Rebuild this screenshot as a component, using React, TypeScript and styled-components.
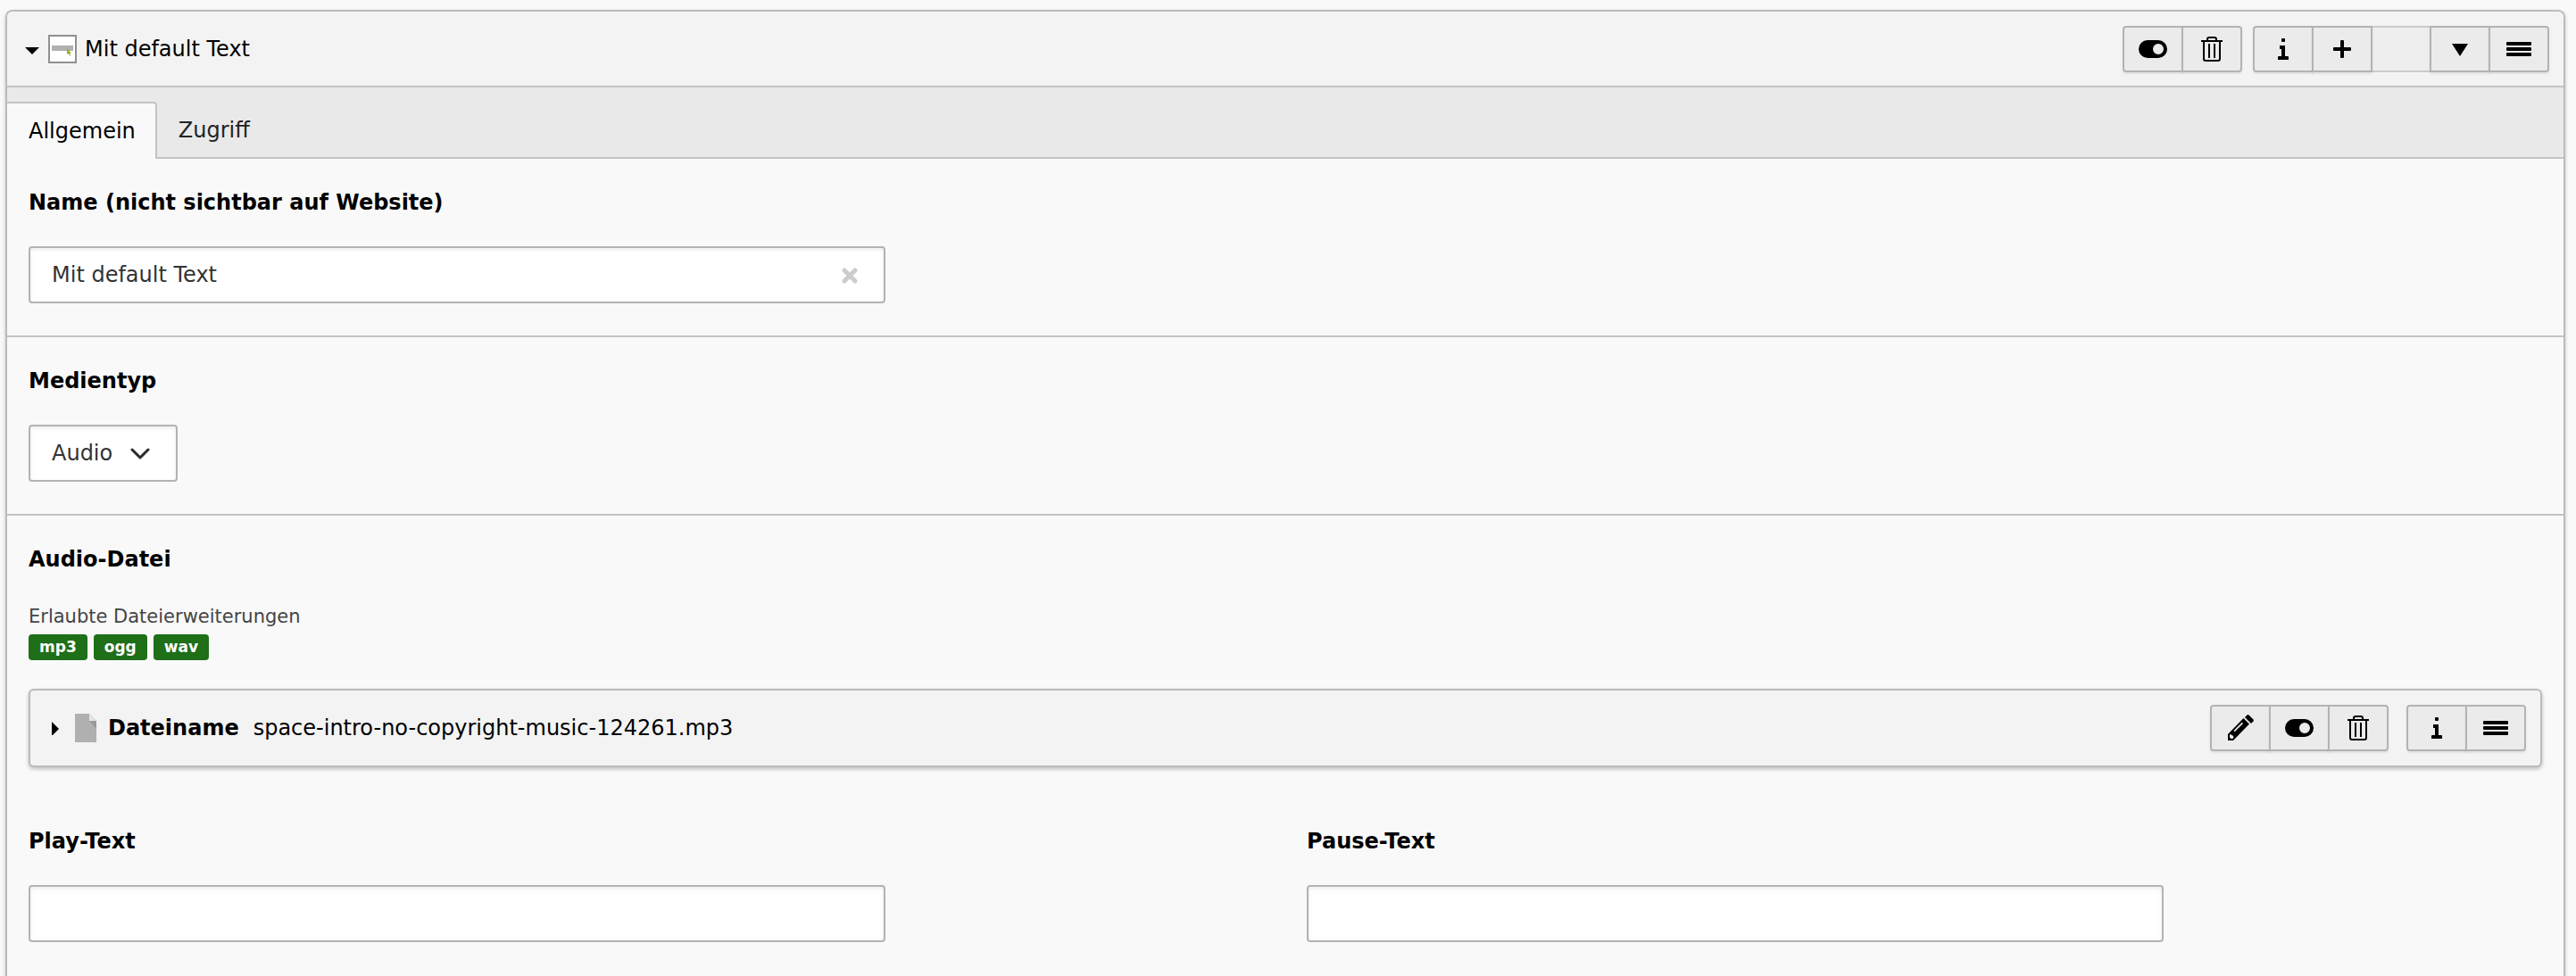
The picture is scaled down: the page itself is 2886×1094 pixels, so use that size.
import React from 'react';
import styled, { createGlobalStyle, css } from 'styled-components';

const GlobalStyle = createGlobalStyle`
  *, *::before, *::after { box-sizing: border-box; }
  body {
    margin: 0;
    background: #f9f9f9;
    color: #000;
    font-family: Verdana, "DejaVu Sans", sans-serif;
    font-size: 24px;
    line-height: 28px;
  }
  button, input, select { font: inherit; }
`;

const Page = styled.main`
  display: flex;
  flex-direction: column;
  min-height: 100vh;
  padding: 11px 12px 0 6px;
`;

const Panel = styled.section`
  flex: 1;
  border: 2px solid #bbb;
  border-bottom: 0;
  border-radius: 8px 8px 0 0;
  box-shadow: 0 2px 4px rgba(0, 0, 0, 0.2);
`;

const PanelHeader = styled.header`
  display: flex;
  align-items: center;
  justify-content: space-between;
  padding: 16px 16px 15px 20px;
  background: #f3f3f3;
  border-radius: 6px 6px 0 0;
`;

const Title = styled.div`
  display: flex;
  align-items: center;
`;

const Collapse = styled.button`
  display: flex;
  align-items: center;
  padding: 0;
  border: 0;
  background: none;
  color: #000;
`;

const RecordIcon = styled.svg`
  width: 32px;
  height: 32px;
  margin: 0 9px 0 10px;
`;

const Toolbar = styled.div<{ $gap: number }>`
  display: flex;
  gap: ${(p) => p.$gap}px;
`;

const Group = styled.div`
  display: flex;
  border-radius: 4px;
`;

const ToolButton = styled.button`
  display: flex;
  align-items: center;
  justify-content: center;
  width: 68px;
  height: 52px;
  padding: 0;
  border: 2px solid #b3b3b3;
  background: #ebebeb;
  color: #000;
  box-shadow: 0 2px 2px rgba(0, 0, 0, 0.08);

  & + & { margin-left: -2px; }
  &:first-child { border-radius: 4px 0 0 4px; }
  &:last-child { border-radius: 0 4px 4px 0; }
  &:not(:disabled) { z-index: 1; }
  &:disabled {
    background: #eee;
    border-color: #cbcbcb;
    box-shadow: none;
  }
`;

const Tabs = styled.div`
  display: flex;
  align-items: flex-end;
  padding-top: 16px;
  background: #e9e9e9;
  border-top: 2px solid #c3c3c3;
  box-shadow: inset 0 -2px 0 #c3c3c3;
`;

const Tab = styled.button<{ $active?: boolean }>`
  height: 64px;
  padding: 0 24px;
  border: 0 solid #c3c3c3;
  background: none;
  color: #212424;
  ${(p) =>
    p.$active &&
    css`
      padding: 0 22px 0 24px;
      border-width: 2px 2px 0 0;
      border-radius: 0 4px 0 0;
      background: #f9f9f9;
      color: #000;
    `}
`;

const Section = styled.div`
  padding: 36px 24px;
  & + & { border-top: 2px solid #c3c3c3; }
`;

const Label = styled.label`
  display: block;
  width: fit-content;
  margin-bottom: 36px;
  font-weight: 700;
  line-height: 26px;
`;

const Control = styled.div`
  position: relative;
  max-width: 960px;
`;

const field = css`
  height: 64px;
  border: 2px solid #b3b3b3;
  border-radius: 4px;
  background: #fff;
  color: #333;
  box-shadow: inset 0 2px 4px rgba(0, 0, 0, 0.08);
  outline: none;
`;

const TextInput = styled.input`
  ${field}
  display: block;
  width: 100%;
  padding: 0 64px 0 24px;
`;

const Clear = styled.button`
  position: absolute;
  top: 16px;
  right: 24px;
  display: flex;
  padding: 0;
  border: 0;
  background: none;
  color: #ccc;
`;

const SelectWrap = styled.div`
  position: relative;
  width: fit-content;
`;

const Select = styled.select`
  ${field}
  display: block;
  appearance: none;
  padding: 0 70px 0 24px;
`;

const Chevron = styled.svg`
  position: absolute;
  top: 16px;
  right: 26px;
  width: 32px;
  height: 32px;
  pointer-events: none;
`;

const Heading = styled.h3`
  margin: 0 0 36px;
  font-size: 24px;
  line-height: 26px;
`;

const Hint = styled.p`
  margin: 0 0 5px;
  color: #444;
  font-size: 21px;
  line-height: 30px;
`;

const Badges = styled.div`
  display: flex;
  gap: 7px;
  margin-bottom: 32px;
`;

const Badge = styled.span`
  padding: 0 12px;
  border-radius: 4px;
  background: #1f6e18;
  color: #fff;
  font-size: 17px;
  font-weight: 700;
  line-height: 29px;
`;

const FilePanel = styled.article`
  display: flex;
  align-items: center;
  justify-content: space-between;
  padding: 16px 16px 16px 20px;
  border: 2px solid #bbb;
  border-radius: 6px;
  background: #f3f3f3;
  box-shadow: 0 2px 4px rgba(0, 0, 0, 0.25);
`;

const FileIcon = styled.svg`
  width: 24px;
  height: 32px;
  margin: 0 13px 0 14px;
`;

const FileName = styled.span`
  margin-left: 16px;
`;

const Columns = styled.div`
  display: grid;
  grid-template-columns: 1fr 1fr;
  margin: 70px -24px 12px;
`;

const Column = styled.div`
  padding: 0 24px;
`;

const Svg = ({ children }: { children: React.ReactNode }) => (
  <svg width="32" height="32" viewBox="0 0 32 32" fill="currentColor" aria-hidden="true">
    {children}
  </svg>
);

const icons = {
  toggle: (
    <path fillRule="evenodd" d="M10 6h12a10 10 0 0 1 0 20H10a10 10 0 0 1 0-20zm12 4a6 6 0 1 0 0 12a6 6 0 0 0 0-12z" />
  ),
  trash: (
    <>
      <path d="M4 6h24v2H4zM12 10h2v16h-2zM18 10h2v16h-2z" />
      <path d="M7 7v20q0 2 2 2h14q2 0 2-2V7M11 7V5q0-2 2-2h6q2 0 2 2v2" fill="none" stroke="currentColor" strokeWidth="2" />
    </>
  ),
  info: <path d="M15 4h2q1 0 1 1v2q0 1-1 1h-2q-1 0-1-1V5q0-1 1-1zM12 12h6v12h3q1 0 1 1v3H10v-3q0-1 1-1h3v-8h-2z" />,
  plus: <path d="M15 6h2q1 0 1 1v7h7q1 0 1 1v2q0 1-1 1h-7v7q0 1-1 1h-2q-1 0-1-1v-7H7q-1 0-1-1v-2q0-1 1-1h7V7q0-1 1-1z" />,
  down: <path d="M7 10h18l-9 14z" />,
  menu: (
    <>
      <rect x="2" y="8" width="28" height="4" rx="1" />
      <rect x="2" y="14" width="28" height="4" rx="1" />
      <rect x="2" y="20" width="28" height="4" rx="1" />
    </>
  ),
  edit: (
    <>
      <path
        fillRule="evenodd"
        d="M2 30v-7L19.500 5l6.500 6.500L8 30zM4 23.500v3l1.500 1.500h2l1-2-1-1.500-1.500-.5-.5-1zM8.500 19l1.200 1.200L19 11l-1.200-1.200z"
      />
      <path d="M21 4l2.500-2.500q1-1 2 0l5 5q1 1 0 2L28 11z" />
    </>
  ),
};

type IconName = keyof typeof icons;

const Tool = ({ icon, label }: { icon?: IconName; label: string }) => (
  <ToolButton type="button" aria-label={label} disabled={!icon}>
    {icon && <Svg>{icons[icon]}</Svg>}
  </ToolButton>
);

export default function App() {
  return (
    <>
      <GlobalStyle />
      <Page>
        <Panel>
          <PanelHeader>
            <Title>
              <Collapse type="button" aria-label="Einklappen" aria-expanded="true">
                <svg width="16" height="16" viewBox="0 0 16 16">
                  <path d="M0 6h16l-8 8z" />
                </svg>
              </Collapse>
              <RecordIcon viewBox="0 0 32 32" aria-hidden="true">
                <path d="M1 1h30v30H1z" fill="#fff" stroke="#909090" strokeWidth="2" />
                <path d="M4 12h24v6H4z" fill="#b0b0b0" />
                <path d="M21 15v7l2-1 1 3 1-1-1-2h2z" fill="#9ab020" />
              </RecordIcon>
              Mit default Text
            </Title>
            <Toolbar $gap={12}>
              <Group>
                <Tool icon="toggle" label="Deaktivieren" />
                <Tool icon="trash" label="Löschen" />
              </Group>
              <Group>
                <Tool icon="info" label="Info" />
                <Tool icon="plus" label="Neu" />
                <Tool label="Nach oben" />
                <Tool icon="down" label="Nach unten" />
                <Tool icon="menu" label="Verschieben" />
              </Group>
            </Toolbar>
          </PanelHeader>

          <Tabs role="tablist">
            <Tab type="button" role="tab" aria-selected="true" $active>
              Allgemein
            </Tab>
            <Tab type="button" role="tab" aria-selected="false">
              Zugriff
            </Tab>
          </Tabs>

          <Section>
            <Label htmlFor="name">Name (nicht sichtbar auf Website)</Label>
            <Control>
              <TextInput id="name" type="text" defaultValue="Mit default Text" />
              <Clear type="button" aria-label="Leeren">
                <Svg>
                  <path d="M10 11l12 12M22 11l-12 12" stroke="currentColor" strokeWidth="5" strokeLinecap="round" />
                </Svg>
              </Clear>
            </Control>
          </Section>

          <Section>
            <Label htmlFor="type">Medientyp</Label>
            <SelectWrap>
              <Select id="type" defaultValue="audio">
                <option value="audio">Audio</option>
              </Select>
              <Chevron viewBox="0 0 32 32" aria-hidden="true">
                <path d="M7 12l9 9 9-9" fill="none" stroke="#2b2b2b" strokeWidth="3" strokeLinecap="round" strokeLinejoin="round" />
              </Chevron>
            </SelectWrap>
          </Section>

          <Section>
            <Heading>Audio-Datei</Heading>
            <Hint>Erlaubte Dateierweiterungen</Hint>
            <Badges>
              <Badge>mp3</Badge>
              <Badge>ogg</Badge>
              <Badge>wav</Badge>
            </Badges>
            <FilePanel>
              <Title>
                <Collapse type="button" aria-label="Ausklappen" aria-expanded="false">
                  <svg width="16" height="16" viewBox="0 0 16 16">
                    <path d="M4 1l8 8-8 8z" />
                  </svg>
                </Collapse>
                <FileIcon viewBox="0 0 24 32" aria-hidden="true">
                  <path d="M0 0h16l8 8v24H0z" fill="#b0b0b0" />
                  <path d="M16 0v8h8z" fill="#e4e4e4" />
                  <path d="M16 8h8v9z" fill="#999" />
                </FileIcon>
                <strong>Dateiname</strong>
                <FileName>space-intro-no-copyright-music-124261.mp3</FileName>
              </Title>
              <Toolbar $gap={20}>
                <Group>
                  <Tool icon="edit" label="Bearbeiten" />
                  <Tool icon="toggle" label="Deaktivieren" />
                  <Tool icon="trash" label="Löschen" />
                </Group>
                <Group>
                  <Tool icon="info" label="Info" />
                  <Tool icon="menu" label="Verschieben" />
                </Group>
              </Toolbar>
            </FilePanel>
            <Columns>
              <Column>
                <Label htmlFor="play">Play-Text</Label>
                <Control>
                  <TextInput id="play" type="text" />
                </Control>
              </Column>
              <Column>
                <Label htmlFor="pause">Pause-Text</Label>
                <Control>
                  <TextInput id="pause" type="text" />
                </Control>
              </Column>
            </Columns>
          </Section>
        </Panel>
      </Page>
    </>
  );
}
